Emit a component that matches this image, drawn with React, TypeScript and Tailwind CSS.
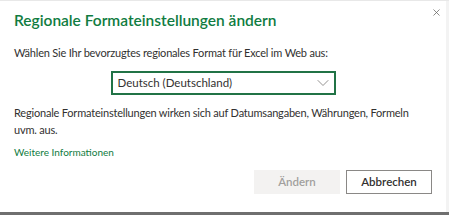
import { ChevronDown, X } from "lucide-react";

export default function App() {
  return (
    <div className="flex h-[215px] w-[449px] flex-col bg-[#6f6f6f] font-['Lato',sans-serif]">
      <div className="flex flex-1 border-t border-[#e8e8e8] bg-[#f3f3f3]">
        <div className="relative flex w-[446px] flex-col bg-white px-[14px] pt-[8px]">
          <button className="absolute right-[4px] top-[6px] text-[#605e5c]">
            <X size={11} strokeWidth={1.6} />
          </button>
          <h1 className="text-[15.5px] font-semibold leading-[22px] text-[#107c41]">
            Regionale Formateinstellungen ändern
          </h1>
          <p className="mt-[14px] text-[11px] leading-[16px] tracking-[-0.2px] text-[#323130]">
            Wählen Sie Ihr bevorzugtes regionales Format für Excel im Web aus:
          </p>
          <div className="mt-[10px] flex justify-center">
            <div className="flex h-[24px] w-[225px] items-center justify-between border-2 border-[#217346] pl-[5px] pr-[1px]">
              <span className="text-[11.5px] text-[#323130]">Deutsch (Deutschland)</span>
              <ChevronDown size={20} strokeWidth={1.1} className="text-[#8a8886]" />
            </div>
          </div>
          <p className="mt-[9px] text-[11px] leading-[17px] tracking-[-0.2px] text-[#323130]">
            Regionale Formateinstellungen wirken sich auf Datumsangaben, Währungen, Formeln
            <br />
            uvm. aus.
          </p>
          <a className="mt-[7px] text-[10px] leading-[14px] text-[#107c41]">Weitere Informationen</a>
          <div className="mt-[11px] flex justify-end gap-[6px]">
            <button className="h-[24px] w-[86px] bg-[#f3f2f1] text-[11.5px] font-semibold text-[#a19f9d]">
              Ändern
            </button>
            <button className="h-[24px] w-[86px] border border-[#8a8886] bg-white text-[11.5px] font-semibold text-[#323130]">
              Abbrechen
            </button>
          </div>
        </div>
      </div>
      <div className="h-[3px]" />
    </div>
  );
}
